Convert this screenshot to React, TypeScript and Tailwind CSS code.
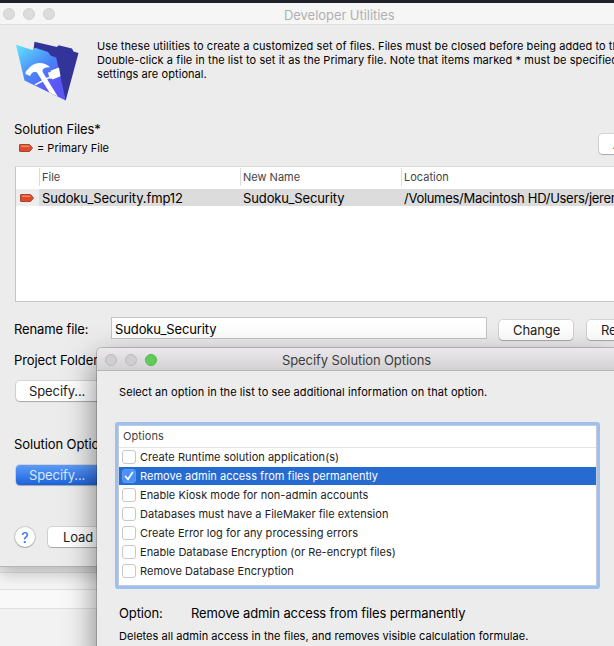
import type { ReactNode } from "react";
import clsx from "clsx";

const options = [
  { label: "Create Runtime solution application(s)", checked: false },
  { label: "Remove admin access from files permanently", checked: true },
  { label: "Enable Kiosk mode for non-admin accounts", checked: false },
  { label: "Databases must have a FileMaker file extension", checked: false },
  { label: "Create Error log for any processing errors", checked: false },
  { label: "Enable Database Encryption (or Re-encrypt files)", checked: false },
  { label: "Remove Database Encryption", checked: false },
];

function PushButton({ children, primary, className }: { children?: ReactNode; primary?: boolean; className?: string }) {
  return (
    <button
      className={clsx(
        "h-5 shrink-0 whitespace-nowrap rounded-[4px] text-left text-[13px] leading-5 tracking-[-0.1px] shadow-[0_0_0_1px_rgba(0,0,0,0.1),0_1px_1px_rgba(0,0,0,0.2)]",
        primary ? "bg-linear-to-b from-[#5b9bf8] to-[#1a62dd] text-[#dbe8fc]" : "bg-white text-[#222]",
        className,
      )}
    >
      {children}
    </button>
  );
}

function PrimaryTag() {
  return (
    <svg width="14" height="8" viewBox="0 0 14 8" className="shrink-0">
      <path d="M1 .5h9.5L13.5 4l-3 3.5H1a.5.5 0 0 1-.5-.5V1A.5.5 0 0 1 1 .5z" fill="#df4a2b" stroke="#a9452f" />
      <path d="M2 2.2h8.3" stroke="#f39a72" strokeWidth="1.2" />
    </svg>
  );
}

function AppIcon() {
  return (
    <svg width="63" height="61" viewBox="0 0 63 61" className="shrink-0">
      <defs>
        <linearGradient id="front" x1="0" y1="0" x2="0.7" y2="1">
          <stop offset="0" stopColor="#62e6fd" />
          <stop offset="0.5" stopColor="#4a86f8" />
          <stop offset="0.85" stopColor="#5c55f6" />
        </linearGradient>
      </defs>
      <path d="M18.500 .7L41 6l1.500-1.700L56 7.500l1.500 3 5 1.500L49.700 59.500 16 20z" fill="#32349a" />
      <path d="M0 3.700L16.500 9l2.500-2.200 13 4.200 2.500 3.500 5.700 2L49.700 59.500 8.500 39.500z" fill="url(#front)" />
      <path d="M32 31.500l2.500-.5.5-1.500L43 26.500l1.500 8.800-8 3.200-1-1.200-1.800.7z" fill="#fff" />
      <path d="M19 43.800L33 36.500" stroke="#fff" strokeWidth="1.500" />
      <path d="M9.600 33c-.3-2 .7-3.500 2.200-4.500 3-4 7-6.300 11.700-6.500 4.500 0 8 1.500 10.700 4.500-3-.8-5.500.2-7.400 1.800l-.3 2.400L41.800 55.500 33.500 51.500 21 31.400c-2-.8-4-.3-5.500 1L14 35z" fill="#fff" />
    </svg>
  );
}

function OptionsDialog() {
  return (
    <div className="absolute left-[97px] top-[348px] flex h-[320px] w-[520px] flex-col rounded-tl-[5px] bg-[#ececec] shadow-[0_0_0_1px_rgba(0,0,0,0.18),0_12px_32px_rgba(0,0,0,0.5)]">
      <div className="flex h-[23px] shrink-0 items-center rounded-tl-[5px] border-b border-[#b5b3b5] bg-linear-to-b from-[#ebe9eb] to-[#d3d1d3] pt-[2px]">
        <div className="flex gap-2 pl-2">
          <span className="size-3 rounded-full border border-[#bababa] bg-[#cfcfcf]" />
          <span className="size-3 rounded-full border border-[#bababa] bg-[#cfcfcf]" />
          <span className="size-3 rounded-full border border-[#52b84c] bg-[#5fcb58]" />
        </div>
        <h2 className="ml-[125px] text-[13px] leading-5 tracking-[-0.1px] text-[#3c3c3c]">Specify Solution Options</h2>
      </div>
      <p className="mt-[13px] pl-[22px] text-[11px] leading-4 tracking-[0.08px]">Select an option in the list to see additional information on that option.</p>
      <div className="ml-[21px] mt-[25px] h-[161px] w-[479px] shrink-0 rounded-[1px] border border-[#c3ccd8] bg-white shadow-[0_0_0_3px_#9dc0ee]">
        <div className="h-[22px] border-b border-[#e4e4e4] pl-[4px] pt-[2px] text-[11px] leading-4 tracking-[0.08px] text-[#444]">Options</div>
        {options.map((option) => (
          <div
            key={option.label}
            className={clsx("flex h-[19px] gap-1 pl-[3px] text-[11px] leading-[18px] tracking-[0.03px]", option.checked ? "border-b border-white bg-[#266bd2] bg-clip-padding text-white" : "text-[#222]")}
          >
            <span className={clsx("mt-[2px] flex size-[14px] items-center justify-center rounded-[3px] border", option.checked ? "border-[#5f9df5] bg-[#4a92f7]" : "border-[#c8c8c8] bg-white")}>
              {option.checked && (
                <svg width="10" height="10" viewBox="0 0 10 10" fill="none" stroke="#fff" strokeWidth="1.7" strokeLinecap="round">
                  <path d="M1.500 5.500L4 8.300 8.500 1.500" />
                </svg>
              )}
            </span>
            <span className="whitespace-nowrap">{option.label}</span>
          </div>
        ))}
      </div>
      <div className="mt-[17px] flex pl-[22px] text-[13px] leading-5 tracking-[-0.13px]">
        <span className="w-[72px]">Option:</span>
        <span>Remove admin access from files permanently</span>
      </div>
      <p className="mt-[5px] whitespace-nowrap pl-[22px] text-[11px] leading-4 tracking-[0.04px]">Deletes all admin access in the files, and removes visible calculation formulae.</p>
    </div>
  );
}

export default function App() {
  return (
    <div className="relative h-[646px] w-[614px] overflow-hidden bg-[#f4f4f4] font-['Inter',sans-serif] text-black">
      <div className="h-[3px] bg-[#20242b]" />
      <div className="relative flex h-[563px] flex-col bg-[#ececec] shadow-[0_1px_0_#b4b4b4,0_8px_16px_rgba(0,0,0,0.22)]">
        <div className="flex h-[22px] shrink-0 items-center border-b border-[#dfdfdf] bg-[#f6f6f6]">
          <div className="flex gap-2 pl-[3px]">
            <span className="size-3 rounded-full border border-[#d2d2d2] bg-[#dcdcdc]" />
            <span className="size-3 rounded-full border border-[#d2d2d2] bg-[#dcdcdc]" />
            <span className="size-3 rounded-full border border-[#d2d2d2] bg-[#dcdcdc]" />
          </div>
          <h1 className="ml-[229px] pt-[2px] text-[13px] leading-5 tracking-[-0.05px] text-[#b0b0b0]">Developer Utilities</h1>
        </div>

        <div className="flex h-[95px] shrink-0 pl-4">
          <div className="pt-4"><AppIcon /></div>
          <p className="whitespace-nowrap pl-[18px] pt-[14px] text-[11px] leading-[14px] tracking-[0.07px]">
            Use these utilities to create a customized set of files. Files must be closed before being added to the list.<br />
            Double-click a file in the list to set it as the Primary file. Note that items marked * must be specified, other<br />
            settings are optional.
          </p>
        </div>

        <div className="flex h-[46px] shrink-0 justify-between">
          <div className="pl-[14px]">
            <h2 className="text-[13px] leading-[18px] tracking-[-0.12px]">Solution Files*</h2>
            <div className="flex h-5 items-center gap-[4px] pl-[5px] text-[11px]"><PrimaryTag /> = Primary File</div>
          </div>
          <PushButton className="mr-[-50px] mt-[14px] w-[65px] pl-[14px]">Add...</PushButton>
        </div>

        <div className="ml-[15px] h-[136px] shrink-0 overflow-hidden border border-r-0 border-[#c6c6c6] border-t-[#dadada] bg-white">
          <div className="flex h-[22px] items-start pt-px text-[11px] leading-5 text-[#444]">
            <span className="h-[18px] w-[23px]" />
            <span className="h-[18px] w-[201px] border-l border-[#dcdcdc] pl-[2px] leading-[18px]">File</span>
            <span className="h-[18px] w-[161px] border-l border-[#dcdcdc] pl-[2px] leading-[18px]">New Name</span>
            <span className="h-[18px] border-l border-[#dcdcdc] pl-[2px] leading-[18px]">Location</span>
          </div>
          <div className="flex h-[17px] bg-[#dcdcdc] text-[13px] leading-[19px] tracking-[-0.12px]">
            <span className="flex h-full w-[23px] shrink-0 items-center bg-[#ededed] pl-1"><PrimaryTag /></span>
            <span className="w-[201px] shrink-0 pl-[3px]">Sudoku_Security.fmp12</span>
            <span className="w-[161px] shrink-0 pl-[3px]">Sudoku_Security</span>
            <span className="whitespace-nowrap pl-[3px] tracking-[-0.3px]">/Volumes/Macintosh HD/Users/jeremy</span>
          </div>
        </div>

        <div className="mt-[15px] flex h-[22px] shrink-0 items-center pl-[14px]">
          <span className="w-[97px] shrink-0 pt-[2px] text-[13px] leading-5 tracking-[-0.12px]">Rename file:</span>
          <div className="h-[22px] w-[376px] shrink-0 border border-[#c4c4c4] bg-white pl-[3px] text-[13px] leading-[22px] tracking-[-0.12px]">Sudoku_Security</div>
          <PushButton className="ml-3 mt-[3px] w-[74px] pl-[14px]">Change</PushButton>
          <PushButton className="ml-[14px] mt-[3px] w-[75px] pl-[14px]">Remove</PushButton>
        </div>

        <div className="flex flex-col items-start pl-[14px] text-[13px] tracking-[-0.1px]">
          <span className="mt-[11px] leading-5">Project Folder*</span>
          <PushButton className="ml-[2px] mt-[11px] w-[98px] pl-[13px]">Specify...</PushButton>
          <span className="mt-[33px] leading-5">Solution Options</span>
          <PushButton primary className="ml-[2px] mt-[11px] w-[98px] pl-[13px]">Specify...</PushButton>
        </div>

        <div className="mt-[42px] flex items-center pl-[15px]">
          <span className="flex size-5 items-center justify-center rounded-full bg-white text-[14px] font-medium text-[#2d7ff2] shadow-[0_0_0_1px_rgba(0,0,0,0.12),0_1px_1px_rgba(0,0,0,0.2)]">?</span>
          <PushButton className="ml-[13px] w-[120px] pl-[15px]">Load Settings...</PushButton>
        </div>
      </div>
      <div className="h-[7px] border-b border-[#dcdcdc] bg-[#eeeeee]" />
      <div className="h-[17px] border-b border-[#dedede] bg-[#f6f6f6]" />
      <div className="h-[19px] border-b border-[#e0e0e0] bg-[#f9f9f9]" />
      <div className="h-[37px] bg-[#f2f2f2]" />
      <OptionsDialog />
    </div>
  );
}
